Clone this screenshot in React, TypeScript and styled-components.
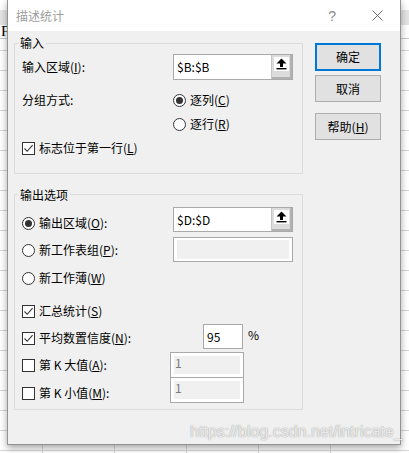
import React from "react";
import styled, { createGlobalStyle } from "styled-components";

const GlobalStyle = createGlobalStyle`
  html, body {
    margin: 0;
    padding: 0;
  }
  body {
    width: 409px;
    height: 453px;
    overflow: hidden;
    font-family: "Noto Sans CJK SC", "Noto Sans", sans-serif;
    font-size: 12px;
    color: #000;
  }
`;

const RefArrow: React.FC = () => (
  <svg width="11" height="12" viewBox="0 0 11 12">
    <path d="M5.5 0.5 L10.5 5.5 L7 5.5 L7 9 L4 9 L4 5.5 L0.5 5.5 Z" fill="#000" />
    <rect x="0.5" y="10" width="10" height="1.4" fill="#000" />
  </svg>
);

const CloseGlyph: React.FC = () => (
  <svg width="11" height="11" viewBox="0 0 11 11">
    <path d="M0.5 0.5 L10.5 10.5 M10.5 0.5 L0.5 10.5" stroke="#6a6a6a" strokeWidth="1" />
  </svg>
);

const Radio: React.FC<{ checked?: boolean }> = ({ checked }) => (
  <RadioCircle>{checked && <RadioDot />}</RadioCircle>
);

const Check: React.FC<{ checked?: boolean }> = ({ checked }) => (
  <CheckBox>
    {checked && (
      <svg width="11" height="11" viewBox="0 0 11 11">
        <path d="M1.5 5.5 L4.2 8.3 L9.6 2.2" fill="none" stroke="#333" strokeWidth="1.1" />
      </svg>
    )}
  </CheckBox>
);

const RefEdit: React.FC<{ value: string; $h: number }> = ({ value, $h }) => (
  <EditBox $h={$h}>
    <EditText>{value}</EditText>
    <RefButton>
      <RefIcon>
        <RefArrow />
      </RefIcon>
    </RefButton>
  </EditBox>
);

const App: React.FC = () => {
  return (
    <Sheet>
      <GlobalStyle />
      <CellF>F</CellF>
      <Dialog>
        <TitleBar>
          <Title>描述统计</Title>
          <HelpGlyph>?</HelpGlyph>
          <CloseGlyph />
        </TitleBar>

        <Body>
          <LeftCol>
            {/* 输入 */}
            <Group>
              <Legend $lift={9}>输入</Legend>
              <FormRow $top={3} $h={26}>
                <span>
                  输入区域(<u>I</u>):
                </span>
                <RefEdit value="$B:$B" $h={26} />
              </FormRow>
              <FormRow $top={8} $h={24}>
                <span>分组方式:</span>
                <Choice>
                  <Radio checked />
                  <span>
                    逐列(<u>C</u>)
                  </span>
                </Choice>
              </FormRow>
              <FormRow $top={0} $h={24}>
                <span />
                <Choice>
                  <Radio />
                  <span>
                    逐行(<u>R</u>)
                  </span>
                </Choice>
              </FormRow>
              <FormRow $top={0} $h={24}>
                <Choice>
                  <Check checked />
                  <span>
                    标志位于第一行(<u>L</u>)
                  </span>
                </Choice>
              </FormRow>
            </Group>

            {/* 输出选项 */}
            <Group $gap={20} $pb={3}>
              <Legend $lift={8}>输出选项</Legend>
              <Columns>
                <Stack>
                  <OptionRow $top={7}>
                    <Radio checked />
                    <span>
                      输出区域(<u>O</u>):
                    </span>
                  </OptionRow>
                  <OptionRow $top={1}>
                    <Radio />
                    <span>
                      新工作表组(<u>P</u>):
                    </span>
                  </OptionRow>
                  <OptionRow $top={2}>
                    <Radio />
                    <span>
                      新工作薄(<u>W</u>)
                    </span>
                  </OptionRow>
                  <OptionRow $top={7}>
                    <Check checked />
                    <span>
                      汇总统计(<u>S</u>)
                    </span>
                  </OptionRow>
                  <OptionRow $top={1}>
                    <Check checked />
                    <span>
                      平均数置信度(<u>N</u>):
                    </span>
                  </OptionRow>
                  <OptionRow $top={1}>
                    <Check />
                    <span>
                      第 K 大值(<u>A</u>):
                    </span>
                  </OptionRow>
                  <OptionRow $top={2}>
                    <Check />
                    <span>
                      第 K 小值(<u>M</u>):
                    </span>
                  </OptionRow>
                </Stack>

                <Stack>
                  <Slot $top={4}>
                    <RefEdit value="$D:$D" $h={25} />
                  </Slot>
                  <Slot $top={5}>
                    <DisabledBox>
                      <DisabledFill />
                    </DisabledBox>
                  </Slot>
                  <Slot $top={62} $left={30}>
                    <PercentRow>
                      <SmallBox>95</SmallBox>
                      <span>%</span>
                    </PercentRow>
                  </Slot>
                  <Slot $top={3} $left={-3}>
                    <KStack>
                      <KCell>
                        <KFill>1</KFill>
                      </KCell>
                      <KCell $divider>
                        <KFill>1</KFill>
                      </KCell>
                    </KStack>
                  </Slot>
                </Stack>
              </Columns>
            </Group>
          </LeftCol>

          <RightCol>
            <Button $primary>确定</Button>
            <Button $top={4}>取消</Button>
            <Button $top={11}>
              帮助(<u>H</u>)
            </Button>
          </RightCol>
        </Body>
      </Dialog>
      <Watermark>https://blog.csdn.net/intricate_</Watermark>
    </Sheet>
  );
};

const Sheet = styled.div`
  position: relative;
  width: 409px;
  height: 453px;
  box-sizing: border-box;
  padding-left: 7px;
  background:
    linear-gradient(#e4e4e4, #e4e4e4) 0 10px / 100% 15px no-repeat,
    linear-gradient(#c8c8c8, #c8c8c8) 0 38px / 100% 1px no-repeat,
    linear-gradient(#fff, #fff) 0 25px / 100% 13px no-repeat,
    linear-gradient(#fff, #fff) 0 0 / 100% 10px no-repeat,
    repeating-linear-gradient(90deg, transparent 0 71px, #d6d6d6 71px 72px) -29px 0 / 100% 100%,
    repeating-linear-gradient(180deg, transparent 0 19px, #d6d6d6 19px 20px) 0 31px / 100% 100%,
    #fff;
`;

const CellF = styled.span`
  position: absolute;
  left: 1px;
  top: 24px;
  font-family: "Liberation Serif", serif;
  font-size: 15px;
  line-height: 14px;
`;

const Dialog = styled.div`
  position: relative;
  z-index: 1;
  width: 394px;
  height: 445px;
  box-sizing: border-box;
  border: 1px solid #939393;
  border-top: none;
  background: #f0f0f0;
  box-shadow: 0 3px 7px rgba(0, 0, 0, 0.35);
  display: flex;
  flex-direction: column;
`;

const TitleBar = styled.div`
  height: 31px;
  background: #fff;
  display: flex;
  align-items: center;
  padding: 0 17px 0 8px;
  flex-shrink: 0;
`;

const Title = styled.span`
  flex: 1;
  color: #9c9c9c;
  font-size: 12px;
  line-height: 16px;
`;

const HelpGlyph = styled.span`
  margin-right: 36px;
  font-family: "Liberation Sans", sans-serif;
  font-size: 14px;
  color: #8c8c8c;
`;

const Body = styled.div`
  display: flex;
  padding: 12px 0 0 6px;
`;

const LeftCol = styled.div`
  width: 289px;
  display: flex;
  flex-direction: column;
`;

const RightCol = styled.div`
  margin-left: 12px;
  width: 66px;
  display: flex;
  flex-direction: column;
`;

const Group = styled.div<{ $gap?: number; $pb?: number }>`
  margin-top: ${(p) => p.$gap ?? 0}px;
  border: 1px solid #dcdcdc;
  padding: 0 9px ${(p) => p.$pb ?? 13}px 7px;
  display: flex;
  flex-direction: column;
`;

const Legend = styled.span<{ $lift: number }>`
  align-self: flex-start;
  margin: -${(p) => p.$lift}px 0 0 -4px;
  padding: 0 2px;
  height: 16px;
  line-height: 16px;
  background: #f0f0f0;
`;

const FormRow = styled.div<{ $top: number; $h: number }>`
  margin-top: ${(p) => p.$top}px;
  height: ${(p) => p.$h}px;
  display: grid;
  grid-template-columns: 151px 120px;
  align-items: center;
  line-height: 16px;
`;

const Choice = styled.label`
  display: flex;
  align-items: center;
  gap: 4px;
  white-space: nowrap;
  line-height: 16px;
`;

const Columns = styled.div`
  display: grid;
  grid-template-columns: 151px 120px;
`;

const Stack = styled.div`
  display: flex;
  flex-direction: column;
`;

const OptionRow = styled.div<{ $top: number }>`
  margin-top: ${(p) => p.$top}px;
  height: 26px;
  display: flex;
  align-items: center;
  gap: 4px;
  white-space: nowrap;
  line-height: 16px;
`;

const Slot = styled.div<{ $top: number; $left?: number }>`
  margin-top: ${(p) => p.$top}px;
  margin-left: ${(p) => p.$left ?? 0}px;
`;

const RadioCircle = styled.span`
  width: 13px;
  height: 13px;
  box-sizing: border-box;
  border: 1px solid #333;
  border-radius: 50%;
  background: #fff;
  display: flex;
  align-items: center;
  justify-content: center;
  flex-shrink: 0;
`;

const RadioDot = styled.span`
  width: 7px;
  height: 7px;
  border-radius: 50%;
  background: #333;
`;

const CheckBox = styled.span`
  width: 13px;
  height: 13px;
  box-sizing: border-box;
  border: 1px solid #333;
  background: #fff;
  display: flex;
  align-items: center;
  justify-content: center;
  flex-shrink: 0;
`;

const EditBox = styled.div<{ $h: number }>`
  width: 120px;
  height: ${(p) => p.$h}px;
  box-sizing: border-box;
  border: 1px solid #a9a9a9;
  background: #fff;
  display: flex;
`;

const EditText = styled.span`
  flex: 1;
  padding-left: 3px;
  display: flex;
  align-items: center;
  font-size: 12px;
  line-height: 16px;
`;

const RefButton = styled.span`
  width: 21px;
  background: #dcdcdc;
  border-left: 1px solid #c4c4c4;
  box-shadow: inset -2px -2px 0 #b2b2b2;
  display: flex;
  justify-content: flex-start;
  padding: 2px 0 0 2px;
  box-sizing: border-box;
`;

const RefIcon = styled.span`
  width: 15px;
  height: 14px;
  background: #fff;
  display: flex;
  align-items: center;
  justify-content: center;
`;

const DisabledBox = styled.div`
  width: 120px;
  height: 25px;
  box-sizing: border-box;
  border: 1px solid #a9a9a9;
  background: #fff;
  padding: 2px 3px;
  display: flex;
`;

const DisabledFill = styled.div`
  flex: 1;
  background: #f0f0f0;
`;

const PercentRow = styled.div`
  display: flex;
  align-items: flex-start;
  gap: 5px;
  line-height: 16px;
  & > span {
    margin-top: 3px;
  }
`;

const SmallBox = styled.div`
  width: 40px;
  height: 25px;
  box-sizing: border-box;
  border: 1px solid #a9a9a9;
  background: #fff;
  padding-left: 3px;
  display: flex;
  align-items: center;
`;

const KStack = styled.div`
  width: 74px;
  box-sizing: border-box;
  border: 1px solid #a9a9a9;
  background: #fff;
`;

const KCell = styled.div<{ $divider?: boolean }>`
  height: 24px;
  box-sizing: border-box;
  padding: 3px 3px;
  border-top: ${(p) => (p.$divider ? "1px solid #a9a9a9" : "none")};
  height: ${(p) => (p.$divider ? 25 : 24)}px;
  display: flex;
`;

const KFill = styled.div`
  flex: 1;
  background: #f0f0f0;
  color: #7a7a7a;
  padding-left: 1px;
  line-height: 14px;
  font-size: 12px;
`;

const Button = styled.button<{ $primary?: boolean; $top?: number }>`
  margin-top: ${(p) => p.$top ?? 0}px;
  width: 66px;
  height: ${(p) => (p.$primary ? 28 : 27)}px;
  box-sizing: border-box;
  border: ${(p) => (p.$primary ? "2px solid #0078d7" : "1px solid #adadad")};
  background: #e1e1e1;
  font-family: "Noto Sans CJK SC", "Noto Sans", sans-serif;
  font-size: 12px;
  line-height: 16px;
  color: #000;
  padding: 0;
`;

const Watermark = styled.span`
  position: absolute;
  z-index: 2;
  left: 190px;
  top: 423px;
  font-family: "Liberation Sans", sans-serif;
  font-size: 16px;
  line-height: 18px;
  color: rgba(255, 255, 255, 0.8);
  text-shadow: 0 0 1px rgba(0, 0, 0, 0.35), 0 0 2px rgba(0, 0, 0, 0.15);
  white-space: nowrap;
`;

export default App;
